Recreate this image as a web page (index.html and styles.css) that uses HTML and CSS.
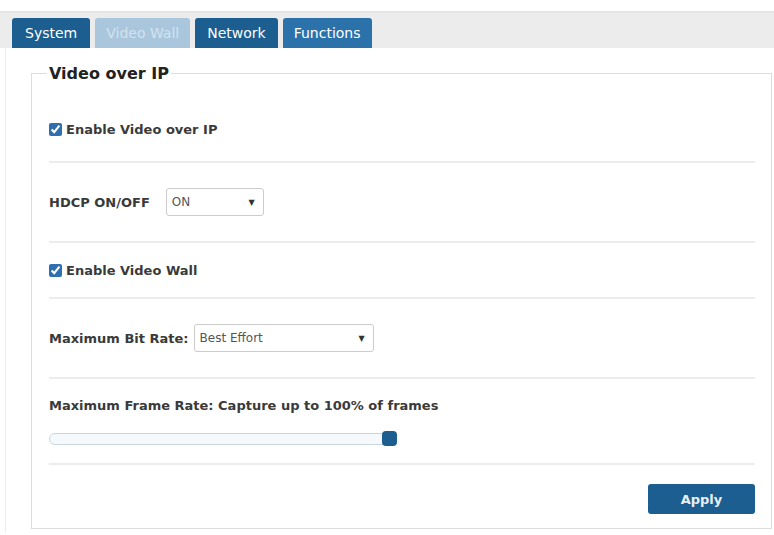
FILE: index.html
```html
<!DOCTYPE html>
<html lang="en">
<head>
  <meta charset="UTF-8">
  <title>Video Wall</title>
  <link rel="stylesheet" href="styles.css">
</head>
<body>

  <div class="tabs">
    <a class="tab tab-dark tab-first">System</a>
    <a class="tab tab-active">Video Wall</a>
    <a class="tab tab-dark">Network</a>
    <a class="tab tab-mid">Functions</a>
  </div>

  <div class="panel">
    <fieldset>
      <legend>Video over IP</legend>

      <div class="row row-first">
        <label class="check"><input type="checkbox" checked> Enable Video over IP</label>
      </div>

      <div class="row row-sel">
        <label class="lbl lbl-hdcp">HDCP ON/OFF</label>
        <div class="select sel-hdcp"><span>ON</span><span class="caret">▼</span></div>
      </div>

      <div class="row row-check">
        <label class="check"><input type="checkbox" checked> Enable Video Wall</label>
      </div>

      <div class="row row-sel">
        <label class="lbl lbl-rate">Maximum Bit Rate:</label>
        <div class="select sel-rate"><span>Best Effort</span><span class="caret">▼</span></div>
      </div>

      <div class="row row-frame">
        <label class="lbl">Maximum Frame Rate: Capture up to 100% of frames</label>
        <div class="slider"><div class="thumb"></div></div>
      </div>

      <div class="actions">
        <button class="apply">Apply</button>
      </div>
    </fieldset>
  </div>

</body>
</html>
```

FILE: styles.css
```css
body { margin: 0; background: #fff; font-family: "DejaVu Sans", Verdana, sans-serif; color: #333; }

.tabs {
  margin-top: 11px;
  height: 35px;
  border-top: 2px solid #e4e4e4;
  background: #ececec;
  display: flex;
  align-items: flex-end;
  gap: 5px;
  padding-left: 12px;
}
.tab {
  color: #fff;
  font-size: 14px;
  padding: 0 12px;
  height: 30px;
  line-height: 31px;
  border-radius: 3px 3px 0 0;
}
.tab-dark { background: #1b5e8f; }
.tab-first { padding: 0 13px; }
.tab-active { background: #a9c6dd; color: #d3e2ee; padding: 0 11px; }
.tab-mid { background: #2b72ab; padding: 0 11px; }

.panel {
  margin-left: 5px;
  border-left: 1px solid #eee;
  padding: 16px 2px 4px 25px;
}

fieldset {
  margin: 0;
  border: 1px solid #ddd;
  padding: 0 16px 14px 17px;
}
legend {
  font-size: 16px;
  font-weight: bold;
  color: #222;
  padding: 0 2px;
  margin-left: -2px;
}

.row {
  display: flex;
  align-items: center;
  border-bottom: 2px solid #ececec;
  font-size: 13px;
  font-weight: bold;
  color: #3a3a3a;
  box-sizing: border-box;
}
.row-first { height: 80px; padding-top: 14px; }
.row-sel { height: 80px; }
.row-check { height: 56px; }

.check { display: flex; align-items: center; gap: 4px; }
.check input { margin: 0; width: 13px; height: 13px; accent-color: #2f6fb0; }

.lbl-hdcp { margin-right: 16px; }
.lbl-rate { margin-right: 5px; }

.select {
  display: flex;
  justify-content: space-between;
  align-items: center;
  height: 28px;
  box-sizing: border-box;
  border: 1px solid #ccc;
  border-radius: 3px;
  padding: 0 8px 0 5px;
  font-weight: normal;
  font-size: 12px;
  color: #555;
  background: #fff;
}
.sel-hdcp { width: 98px; }
.sel-rate { width: 180px; }
.caret { font-size: 8px; color: #333; }

.row-frame {
  flex-direction: column;
  align-items: flex-start;
  height: 86px;
  padding-top: 19px;
}
.slider {
  margin-top: 20px;
  width: 340px;
  height: 10px;
  border: 1px solid #c9d6e0;
  border-radius: 6px;
  background: #f6f9fb;
  position: relative;
}
.thumb {
  position: absolute;
  right: -7px;
  top: -3px;
  width: 15px;
  height: 15px;
  border-radius: 4px;
  background: #1b5e8f;
}

.actions {
  display: flex;
  justify-content: flex-end;
  padding-top: 19px;
}
.apply {
  width: 107px;
  height: 30px;
  border: none;
  border-radius: 3px;
  background: #1b5e8f;
  color: #e8f0f7;
  font-family: "DejaVu Sans", Verdana, sans-serif;
  font-weight: bold;
  font-size: 13px;
}
```
